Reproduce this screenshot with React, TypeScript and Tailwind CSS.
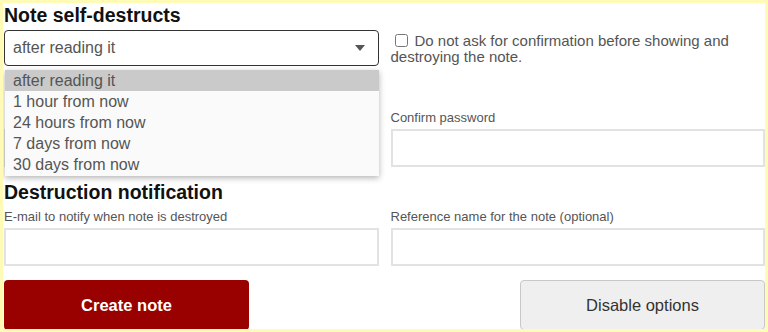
import React from 'react';

const options = ['after reading it', '1 hour from now', '24 hours from now', '7 days from now', '30 days from now'];

const Field = ({ label }: { label: string }) => (
  <div>
    <label className="block h-[16px] text-[13px] leading-[16px] text-[#555] mb-[3px]">{label}</label>
    <input type="text" className="block w-full h-[38px] border-2 border-[#e2e2e2] bg-white outline-none" />
  </div>
);

const App = () => {
  return (
    <div
      className="bg-[#fffbb6] pt-[3px] pl-[3px] pr-[3px] pb-[3px] w-[768px] h-[332px] overflow-hidden"
      style={{ fontFamily: '"Liberation Sans", Arial, sans-serif' }}
    >
      <div className="bg-white pl-[1px] h-[326px] overflow-hidden">
        <h2 className="text-[19.5px] leading-[22px] font-bold text-[#111] pt-[1px]">Note self-destructs</h2>
        <div className="grid grid-cols-2 gap-x-[12px] mt-[4px]">
          <div className="relative">
            <div className="h-[36px] border-[1.5px] border-[#333] rounded-[4px] flex items-center justify-between pl-[8px] pr-[13px] text-[16px] text-[#555]">
              <span>after reading it</span>
              <svg width="10" height="6" viewBox="0 0 10 6">
                <path d="M0 0 L10 0 L5 6 Z" fill="#555" />
              </svg>
            </div>
            {/* open dropdown list */}
            <div className="absolute left-[1px] right-0 top-[40px] z-10 bg-[#fafafa] shadow-[0_2px_6px_rgba(0,0,0,0.3)] pb-[1px]">
              {options.map((o, i) => (
                <div
                  key={o}
                  className={
                    'h-[21px] leading-[21px] pl-[8px] text-[16px] text-[#555] ' + (i === 0 ? 'bg-[#cacaca]' : '')
                  }
                >
                  {o}
                </div>
              ))}
            </div>
          </div>
          <div className="pt-[3px] text-[15px] leading-[16px] text-[#555]">
            <input type="checkbox" className="ml-[4px] mr-[7px] align-[-1px] w-[13px] h-[13px]" />
            Do not ask for confirmation before showing and destroying the note.
          </div>
        </div>

        <div className="grid grid-cols-2 gap-x-[12px] mt-[44px]">
          <Field label="" />
          <Field label="Confirm password" />
        </div>

        <h2 className="text-[19.5px] leading-[22px] font-bold text-[#111] mt-[14px]">Destruction notification</h2>
        <div className="grid grid-cols-2 gap-x-[12px] mt-[6px]">
          <Field label="E-mail to notify when note is destroyed" />
          <Field label="Reference name for the note (optional)" />
        </div>

        <div className="flex justify-between mt-[14px]">
          <button className="w-[245px] h-[50px] bg-[#990000] text-white font-bold text-[16.5px] rounded-[4px]">
            Create note
          </button>
          <button className="w-[245px] h-[50px] bg-[#efefef] text-[#333] text-[16.5px] rounded-[4px] border border-[#c8c8c8]">
            Disable options
          </button>
        </div>
      </div>
    </div>
  );
};

export default App;
